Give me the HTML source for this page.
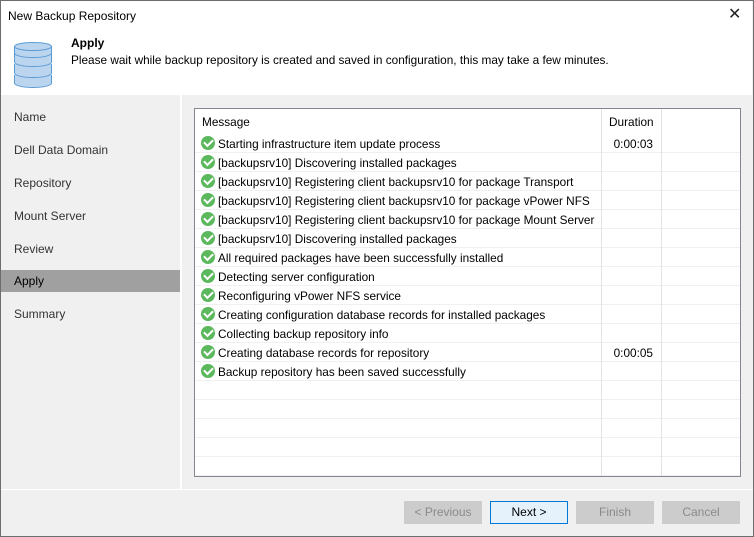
<!DOCTYPE html>
<html><head><style>
*{margin:0;padding:0;box-sizing:border-box}
body{width:754px;height:537px;background:#f0f0f0;font-family:"Liberation Sans",sans-serif;font-size:12px;color:#000;position:relative;overflow:hidden}
.win{position:absolute;left:0;top:0;width:754px;height:537px;border:1px solid #6d6d6d;}
.top{position:absolute;left:0;top:0;width:752px;height:95px;background:#fff}
.title{position:absolute;left:8px;top:9px;font-size:12px}
.close{position:absolute;left:728px;top:4px;font-size:16px;color:#222}
.h1{position:absolute;left:71px;top:36px;font-weight:bold}
.h2{position:absolute;left:71px;top:53px;font-size:11.8px}
.nav{position:absolute;left:0;top:95px;width:180px;height:394px;background:#f0f0f0}
.nav div{position:absolute;left:0;width:180px;height:22px;line-height:22px;padding-left:14px;color:#333}
.sep{position:absolute;left:180px;top:95px;width:2px;height:394px;background:#fff}
.tbl{position:absolute;left:194px;top:108px;width:547px;height:369px;background:#fff;border:1px solid #828790;overflow:hidden;font-size:11.8px}
.row{position:absolute;left:0;width:545px;height:19px;border-bottom:1px solid #f0f0f0}
.row span{position:absolute;left:23px;top:3px;white-space:nowrap}
.row i{position:absolute;left:6px;top:2px;width:14px;height:14px;border-radius:50%;background:#5cb85c}
.row i:after{content:"";position:absolute;left:3px;top:3px;width:7px;height:4px;border-left:2px solid #fff;border-bottom:2px solid #fff;transform:rotate(-45deg)}
.row b{position:absolute;left:418px;top:3px;font-weight:normal;width:40px;text-align:right}
.vl{position:absolute;top:0;width:1px;height:369px;background:#e3e3e3}
.btn{position:absolute;top:501px;width:78px;height:23px;border:1px solid #ccc;background:#ccc;color:#8a8a8a;text-align:center;line-height:21px}
</style></head><body>
<div class="top">
<div class="title">New Backup Repository</div>
<div class="close">✕</div>
<svg style="position:absolute;left:14px;top:42px" width="38" height="46" viewBox="0 0 38 46">
<g fill="#bcd5ee" stroke="#5b9bd5" stroke-width="1">
<path d="M0.5 33v8c0 2.5 8 4.5 18.5 4.5s18.5-2 18.5-4.5v-8"/>
<path d="M0.5 22v9c0 2.5 8 4.5 18.5 4.5s18.5-2 18.5-4.5v-9"/>
<path d="M0.5 11v9c0 2.5 8 4.5 18.5 4.5s18.5-2 18.5-4.5v-9"/>
<path d="M0.5 4v7c0 2.5 8 4.5 18.5 4.5s18.5-2 18.5-4.5V4"/>
<ellipse cx="19" cy="4.5" rx="18.5" ry="4"/>
</g></svg>
<div class="h1">Apply</div>
<div class="h2">Please wait while backup repository is created and saved in configuration, this may take a few minutes.</div>
</div>
<div class="nav">
<div style="top:11px">Name</div>
<div style="top:44px">Dell Data Domain</div>
<div style="top:77px">Repository</div>
<div style="top:110px">Mount Server</div>
<div style="top:143px">Review</div>
<div style="top:175px;background:#a0a0a0;color:#000">Apply</div>
<div style="top:208px">Summary</div>
</div>
<div class="sep"></div>
<div class="tbl">
<div class="row" style="top:0;height:25px;border-bottom:none"><span style="left:7px;top:6px">Message</span><b style="left:414px;top:6px;width:auto">Duration</b></div>
<div class="row" style="top:25px"><i></i><span>Starting infrastructure item update process</span><b>0:00:03</b></div>
<div class="row" style="top:44px"><i></i><span>[backupsrv10] Discovering installed packages</span></div>
<div class="row" style="top:63px"><i></i><span>[backupsrv10] Registering client backupsrv10 for package Transport</span></div>
<div class="row" style="top:82px"><i></i><span>[backupsrv10] Registering client backupsrv10 for package vPower NFS</span></div>
<div class="row" style="top:101px"><i></i><span>[backupsrv10] Registering client backupsrv10 for package Mount Server</span></div>
<div class="row" style="top:120px"><i></i><span>[backupsrv10] Discovering installed packages</span></div>
<div class="row" style="top:139px"><i></i><span>All required packages have been successfully installed</span></div>
<div class="row" style="top:158px"><i></i><span>Detecting server configuration</span></div>
<div class="row" style="top:177px"><i></i><span>Reconfiguring vPower NFS service</span></div>
<div class="row" style="top:196px"><i></i><span>Creating configuration database records for installed packages</span></div>
<div class="row" style="top:215px"><i></i><span>Collecting backup repository info</span></div>
<div class="row" style="top:234px"><i></i><span>Creating database records for repository</span><b>0:00:05</b></div>
<div class="row" style="top:253px"><i></i><span>Backup repository has been saved successfully</span></div>
<div class="row" style="top:272px"></div>
<div class="row" style="top:291px"></div>
<div class="row" style="top:310px"></div>
<div class="row" style="top:329px"></div>
<div class="row" style="top:348px"></div>
<div class="vl" style="left:406px"></div>
<div class="vl" style="left:466px"></div>
</div>
<div style="position:absolute;left:0;top:489px;width:754px;height:1px;background:#fff"></div>
<div class="btn" style="left:404px">&lt; Previous</div>
<div class="btn" style="left:490px;background:#e5f1fb;border-color:#0078d7;color:#000">Next &gt;</div>
<div class="btn" style="left:576px">Finish</div>
<div class="btn" style="left:662px">Cancel</div>
<div class="win"></div>
</body></html>
